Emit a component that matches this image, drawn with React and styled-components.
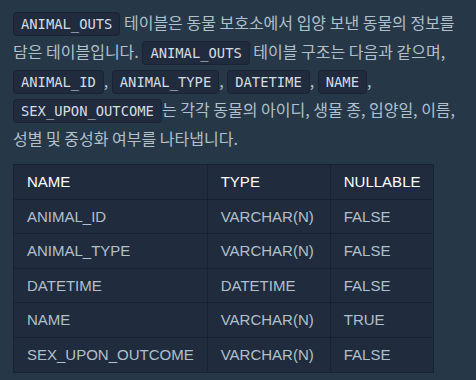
import React from "react";
import styled, { createGlobalStyle } from "styled-components";

const Global = createGlobalStyle`
  html, body { margin: 0; padding: 0; background: #263747; }
  body { font-family: "Noto Sans CJK KR", "Noto Sans", sans-serif; }
`;

const Page = styled.div`
  padding: 8px 12px 0 13px;
  color: #b2c0cc;
  width: 476px;
  box-sizing: border-box;
`;

const Paragraph = styled.p`
  margin: 0 0 11px;
  font-size: 16px;
  line-height: 29px;
  word-break: keep-all;
`;

const Code = styled.code`
  font-family: "DejaVu Sans Mono", "Liberation Mono", monospace;
  font-size: 13.8px;
  line-height: 1;
  color: #d4dde6;
  background: #202b3d;
  border: 1px solid #1a2434;
  border-radius: 4px;
  padding: 3px 7px;
`;

const Table = styled.table`
  border-collapse: collapse;
  background: #202b3d;
  font-family: "Liberation Sans", Arial, sans-serif;
  font-size: 15px;
`;

const HeadCell = styled.th`
  text-align: left;
  font-weight: 400;
  color: #ffffff;
  padding: 8px 13px;
  line-height: 17.6px;
  border: 1px solid #172334;
`;

const Cell = styled.td`
  color: #b2c0cc;
  padding: 8px 13px;
  line-height: 17.6px;
  border: 1px solid #172334;
`;

const TypeCell = styled(Cell)`
  padding-right: 16px;
`;

const rows = [
  ["ANIMAL_ID", "VARCHAR(N)", "FALSE"],
  ["ANIMAL_TYPE", "VARCHAR(N)", "FALSE"],
  ["DATETIME", "DATETIME", "FALSE"],
  ["NAME", "VARCHAR(N)", "TRUE"],
  ["SEX_UPON_OUTCOME", "VARCHAR(N)", "FALSE"],
];

export default function App() {
  return (
    <>
      <Global />
      <Page>
        <Paragraph>
          <Code>ANIMAL_OUTS</Code> 테이블은 동물 보호소에서 입양 보낸 동물의 정보를
          담은 테이블입니다. <Code>ANIMAL_OUTS</Code> 테이블 구조는 다음과 같으며,{" "}
          <Code>ANIMAL_ID</Code>, <Code>ANIMAL_TYPE</Code>, <Code>DATETIME</Code>,{" "}
          <Code>NAME</Code>, <Code>SEX_UPON_OUTCOME</Code>는 각각 동물의 아이디, 생물 종,
          입양일, 이름, 성별 및 중성화 여부를 나타냅니다.
        </Paragraph>
        <Table>
          <thead>
            <tr>
              <HeadCell>NAME</HeadCell>
              <HeadCell>TYPE</HeadCell>
              <HeadCell>NULLABLE</HeadCell>
            </tr>
          </thead>
          <tbody>
            {rows.map(([name, type, nullable]) => (
              <tr key={name}>
                <Cell>{name}</Cell>
                <TypeCell>{type}</TypeCell>
                <Cell>{nullable}</Cell>
              </tr>
            ))}
          </tbody>
        </Table>
      </Page>
    </>
  );
}
